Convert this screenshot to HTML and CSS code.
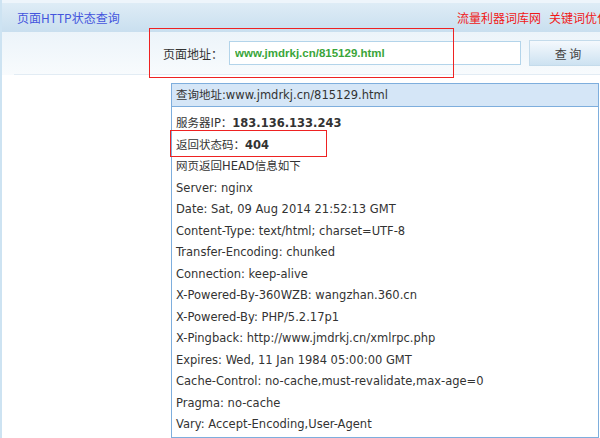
FILE: index.html
```html
<!DOCTYPE html>
<html lang="zh-CN">
<head>
    <meta charset="UTF-8">
    <meta name="viewport" content="width=device-width, initial-scale=1.0">
    <title>页面HTTP状态查询</title>
    <link rel="stylesheet" href="styles.css">
</head>
<body>
    <div class="page">
        <div class="topbar">
            <h1 class="title">页面HTTP状态查询</h1>
            <div class="links">
                <a href="#">流量利器词库网</a>
                <a href="#">关键词优化工具</a>
            </div>
        </div>

        <div class="search-wrap">
            <form class="search" onsubmit="return false">
                <label for="url">页面地址：</label>
                <input type="text" id="url" value="www.jmdrkj.cn/815129.html">
                <button type="submit">查 询</button>
            </form>
        </div>

        <div class="result">
            <div class="result-head">查询地址:www.jmdrkj.cn/815129.html</div>
            <div class="result-body">
                <p>服务器IP：<b>183.136.133.243</b></p>
                <p>返回状态码：<b>404</b></p>
                <p>网页返回HEAD信息如下</p>
                <p>Server: nginx</p>
                <p>Date: Sat, 09 Aug 2014 21:52:13 GMT</p>
                <p>Content-Type: text/html; charset=UTF-8</p>
                <p>Transfer-Encoding: chunked</p>
                <p>Connection: keep-alive</p>
                <p>X-Powered-By-360WZB: wangzhan.360.cn</p>
                <p>X-Powered-By: PHP/5.2.17p1</p>
                <p>X-Pingback: http://www.jmdrkj.cn/xmlrpc.php</p>
                <p>Expires: Wed, 11 Jan 1984 05:00:00 GMT</p>
                <p>Cache-Control: no-cache,must-revalidate,max-age=0</p>
                <p>Pragma: no-cache</p>
                <p>Vary: Accept-Encoding,User-Agent</p>
            </div>
        </div>

        <!-- annotation marks -->
        <div class="mark mark-url"></div>
        <div class="mark mark-code"></div>
    </div>
</body>
</html>
```

FILE: styles.css
```css
/* Page */
html, body {
    margin: 0;
    padding: 0;
    overflow: hidden;
    background: #fff;
}

.page {
    position: relative;
    width: 640px;
    height: 438px;
    border-left: 2px solid #cde3f2;
    font-family: "DejaVu Sans", "Noto Sans CJK SC", sans-serif;
    color: #333;
}

/* Top bar */
.topbar {
    display: flex;
    align-items: center;
    height: 29px;
    border-top: 3px solid #eef5fb;
    background: linear-gradient(#deecf6, #c9dfef);
}

.title {
    margin: 0 0 0 15px;
    font-family: "Noto Sans CJK SC", sans-serif;
    font-size: 12px;
    font-weight: normal;
    color: #4455dd;
    flex: 1;
}

.links {
    display: flex;
    gap: 8px;
    width: 185px;
    white-space: nowrap;
}

.links a {
    font-family: "Noto Sans CJK SC", sans-serif;
    font-size: 12px;
    color: #f01818;
    text-decoration: none;
}

/* Search form */
.search-wrap {
    background: linear-gradient(#ecf4fa, #f8fbfd);
}

.search {
    display: flex;
    align-items: center;
    height: 42px;
    margin-left: 12px;
    padding-left: 149px;
    border-bottom: 1px solid #e2ecf4;
}

.search label {
    width: 66px;
    font-family: "Noto Sans CJK SC", sans-serif;
    font-size: 12px;
    color: #333;
}

.search input {
    box-sizing: border-box;
    width: 292px;
    height: 24px;
    margin: 0;
    padding: 0 5px;
    border: 1px solid #b3d4ea;
    background: #fff;
    font-family: "Liberation Sans", sans-serif;
    font-size: 11.5px;
    font-weight: bold;
    color: #3aa53a;
    outline: none;
}

.search button {
    box-sizing: border-box;
    width: 78px;
    height: 26px;
    margin-left: 8px;
    border: 1px solid #c4dbeb;
    background: linear-gradient(#f5f9fd, #cde2f1);
    font-family: "Noto Sans CJK SC", sans-serif;
    font-size: 12px;
    color: #444;
    cursor: pointer;
}

/* Result box */
.result {
    width: 426px;
    margin: 8px 0 0 169px;
    border: 1px solid #7eaedd;
    font-size: 11.5px;
}

.result-head {
    height: 22px;
    line-height: 22px;
    padding-left: 4px;
    background: #d5e6f7;
    border-bottom: 1px solid #7eaedd;
}

.result-body {
    padding: 6px 4px 1px;
}

.result-body p {
    margin: 0;
    line-height: 21.5px;
    white-space: nowrap;
}

.result-body b {
    color: #333;
}

/* Red annotation marks */
.mark {
    position: absolute;
    border: 1px solid #ee2222;
}

.mark-url {
    left: 147px;
    top: 28px;
    width: 303px;
    height: 48px;
}

.mark-code {
    left: 168px;
    top: 130px;
    width: 155px;
    height: 25px;
}
```
